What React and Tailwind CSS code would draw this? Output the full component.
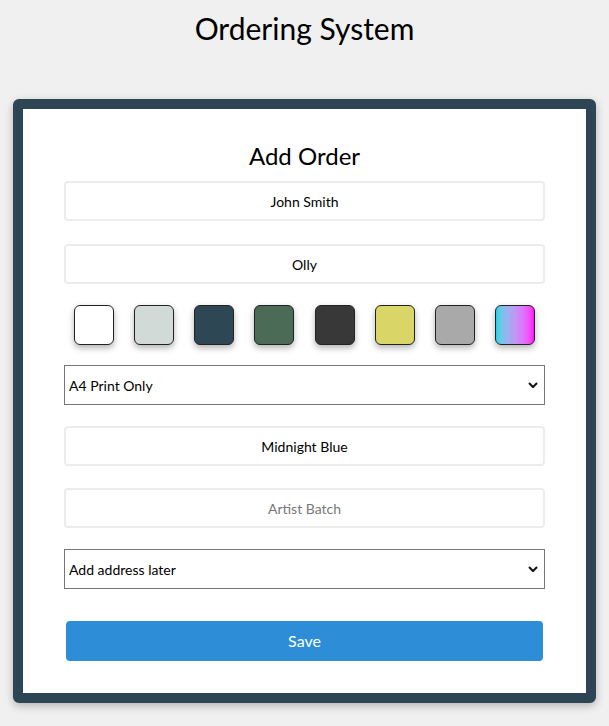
import React from 'react';

const swatches = [
  'bg-white',
  'bg-[#d1dad7]',
  'bg-[#2e4755]',
  'bg-[#4c6b56]',
  'bg-[#383838]',
  'bg-[#d9d566]',
  'bg-[#a9a9a9]',
  'bg-gradient-to-r from-[#00d5e6] to-[#ff00ff]',
];

function Chevron() {
  return (
    <svg className="pointer-events-none absolute right-[7px] top-1/2 -translate-y-1/2" width="10" height="7" viewBox="0 0 10 7">
      <path d="M1 1.5 L5 5.5 L9 1.5" fill="none" stroke="#111" strokeWidth="2" />
    </svg>
  );
}

function Select({ value }) {
  return (
    <div className="relative">
      <select
        defaultValue={value}
        className="w-full h-10 appearance-none border border-[#767676] bg-white pl-1 pr-6 text-[14px] text-black outline-none"
      >
        <option>{value}</option>
      </select>
      <Chevron />
    </div>
  );
}

function Field({ value, placeholder }) {
  return (
    <input
      defaultValue={value}
      placeholder={placeholder}
      className="w-full h-10 rounded border-2 border-[#ececec] bg-white text-center text-[14px] text-black placeholder:text-[#777] outline-none"
    />
  );
}

export default function App() {
  return (
    <div className="min-h-screen bg-[#f0f0f0] pt-[10px] font-['Lato','Noto_Sans',sans-serif]">
      <h1 className="text-center text-[30px] leading-9 text-black">Ordering System</h1>

      <div className="mx-[13px] mt-[53px] rounded-md border-[10px] border-[#2e4654] bg-white shadow-[0_3px_8px_rgba(0,0,0,0.25)]">
        <div className="px-[41px] pt-[31px] pb-[32px]">
          <h2 className="text-center text-[24px] leading-8 text-black mb-[9px]">Add Order</h2>

          <div className="flex flex-col">
            <Field value="John Smith" />
            <div className="mt-[23px]">
              <Field value="Olly" />
            </div>

            <div className="mt-[21px] flex justify-between px-[10px]">
              {swatches.map((c, i) => (
                <div
                  key={i}
                  className={`h-10 w-10 rounded-md border border-[#222] shadow-[0_3px_6px_rgba(0,0,0,0.3)] ${c}`}
                />
              ))}
            </div>

            <div className="mt-[20px]">
              <Select value="A4 Print Only" />
            </div>

            <div className="mt-[21px]">
              <Field value="Midnight Blue" />
            </div>

            <div className="mt-[22px]">
              <Field placeholder="Artist Batch" />
            </div>

            <div className="mt-[21px]">
              <Select value="Add address later" />
            </div>

            <button className="mx-[2px] mt-[32px] h-10 rounded-sm bg-[#2d8dd6] text-[16px] text-white">
              Save
            </button>
          </div>
        </div>
      </div>
    </div>
  );
}
